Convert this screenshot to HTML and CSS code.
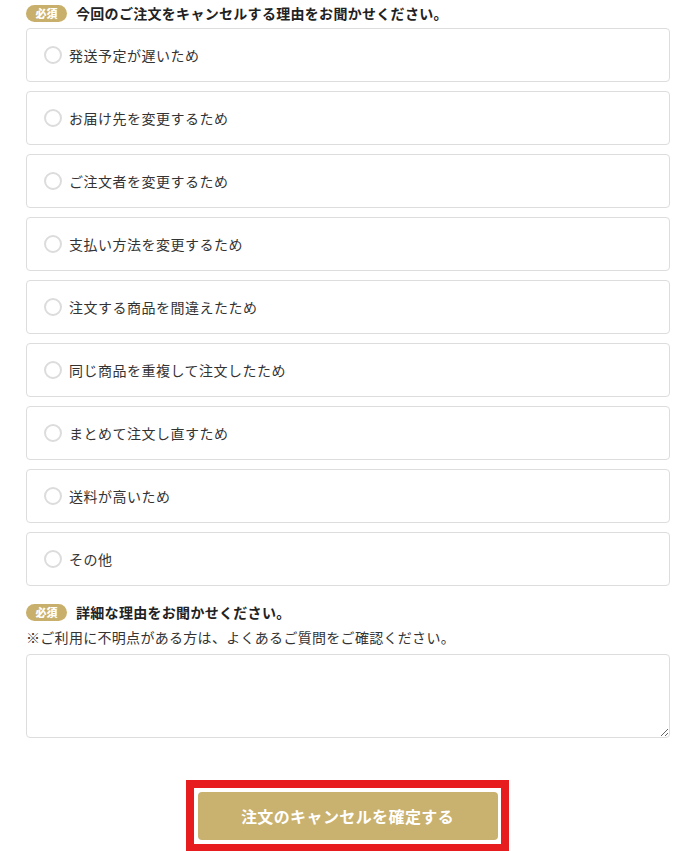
FILE: index.html
```html
<!DOCTYPE html>
<html lang="ja">
<head>
<meta charset="utf-8">
<title>注文のキャンセル</title>
<link rel="stylesheet" href="styles.css">
</head>
<body>
<div class="page">
  <div class="label-row label-first">
    <span class="badge">必須</span>
    <span class="label">今回のご注文をキャンセルする理由をお聞かせください。</span>
  </div>
  <div class="options">
    <label class="option"><span class="radio"></span><span>発送予定が遅いため</span></label>
    <label class="option"><span class="radio"></span><span>お届け先を変更するため</span></label>
    <label class="option"><span class="radio"></span><span>ご注文者を変更するため</span></label>
    <label class="option"><span class="radio"></span><span>支払い方法を変更するため</span></label>
    <label class="option"><span class="radio"></span><span>注文する商品を間違えたため</span></label>
    <label class="option"><span class="radio"></span><span>同じ商品を重複して注文したため</span></label>
    <label class="option"><span class="radio"></span><span>まとめて注文し直すため</span></label>
    <label class="option"><span class="radio"></span><span>送料が高いため</span></label>
    <label class="option"><span class="radio"></span><span>その他</span></label>
  </div>
  <div class="label-row label-second">
    <span class="badge">必須</span>
    <span class="label">詳細な理由をお聞かせください。</span>
  </div>
  <p class="note">※ご利用に不明点がある方は、よくあるご質問をご確認ください。</p>
  <textarea class="detail"></textarea>
  <div class="submit-wrap">
    <div class="highlight">
      <button class="submit" type="button">注文のキャンセルを確定する</button>
    </div>
  </div>
</div>
</body>
</html>
```

FILE: styles.css
```css
html, body {
  margin: 0;
  padding: 0;
  background: #fff;
}
body {
  font-family: "Noto Sans CJK JP", "Noto Sans", sans-serif;
  color: #333;
  font-size: 14px;
}
.page {
  width: 644px;
  padding-left: 26px;
}
.label-row {
  display: flex;
  align-items: center;
  gap: 9px;
  height: 17px;
}
.label-first {
  margin-top: 5px;
  margin-bottom: 6px;
}
.label-second {
  margin-top: 18px;
}
.badge {
  display: inline-flex;
  align-items: center;
  justify-content: center;
  width: 41px;
  height: 17px;
  border-radius: 9px;
  background: #c8b06c;
  color: #fff;
  font-family: "Noto Sans CJK JP", sans-serif;
  font-weight: 900;
  font-size: 11px;
  line-height: 1;
}
.label {
  font-weight: 700;
  font-size: 14px;
  color: #222;
  line-height: 17px;
  letter-spacing: 0.3px;
}
.options {
  display: flex;
  flex-direction: column;
  gap: 9px;
}
.option {
  display: flex;
  align-items: center;
  height: 52px;
  border: 1px solid #ddd;
  border-radius: 4px;
  padding-left: 17px;
  gap: 7px;
  font-size: 14px;
  color: #333;
  letter-spacing: 0.5px;
}
.radio {
  width: 14px;
  height: 14px;
  border: 2px solid #dcdcdc;
  border-radius: 50%;
  background: #fff;
  flex: none;
}
.note {
  margin: 6px 0 0;
  font-size: 14px;
  line-height: 20px;
  color: #333;
  letter-spacing: 0.3px;
}
.detail {
  display: block;
  box-sizing: border-box;
  width: 644px;
  height: 84px;
  margin-top: 7px;
  border: 1px solid #ddd;
  border-radius: 4px;
  resize: vertical;
  font-family: inherit;
  font-size: 14px;
}
.submit-wrap {
  display: flex;
  justify-content: center;
  margin-top: 42px;
  padding-right: 2px;
}
.highlight {
  border: 8px solid #e61c1e;
  padding: 4px 3px 4px 4px;
  background: #fff;
}
.submit {
  display: block;
  width: 300px;
  height: 48px;
  border: none;
  border-radius: 4px;
  background: #c9b16f;
  color: #fff;
  font-family: "Noto Sans CJK JP", sans-serif;
  font-weight: 700;
  font-size: 16px;
  letter-spacing: 0.4px;
  cursor: pointer;
}
```
